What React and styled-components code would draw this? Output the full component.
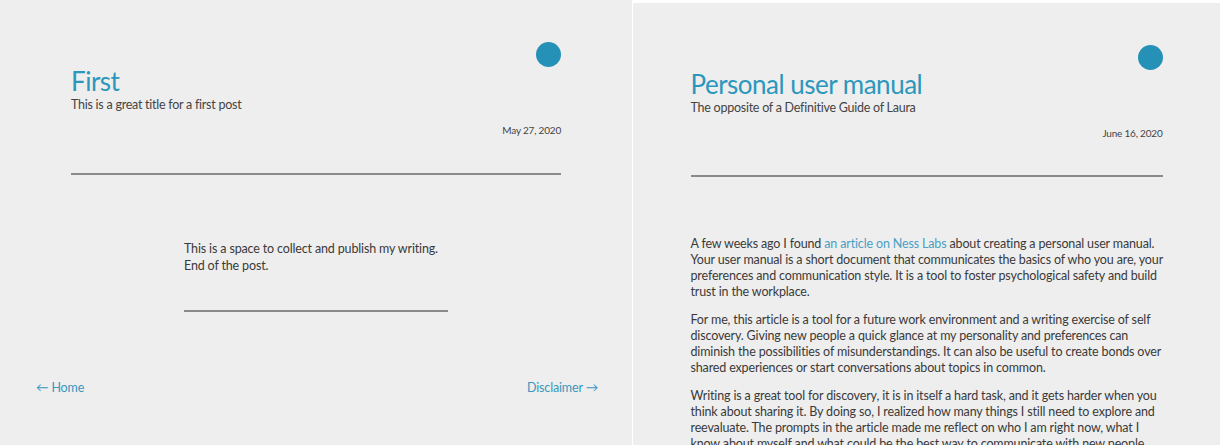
import React from 'react';
import styled, { createGlobalStyle } from 'styled-components';

const GlobalStyle = createGlobalStyle`
  html, body {
    margin: 0;
    padding: 0;
    background: #ffffff;
  }
  body {
    font-family: Lato, "Open Sans", sans-serif;
    color: #333;
  }
`;

// --- layout ---

const Page = styled.div`
  display: flex;
  align-items: flex-start;
  gap: 1px;
  width: 1222px;
  height: 445px;
  overflow: hidden;
`;

const Screen = styled.div`
  flex: 0 0 ${p => p.$width}px;
  height: 445px;
  margin-top: ${p => p.$top || 0}px;
  background: #eeeeee;
  display: flex;
  flex-direction: column;
  overflow: hidden;
`;

const Container = styled.div`
  width: ${p => p.$width}px;
  margin: 0 auto;
  display: flex;
  flex-direction: column;
`;

// --- header ---

const TopBar = styled.div`
  display: flex;
  justify-content: flex-end;
  padding-top: 42px;
  height: 25px;
`;

const Dot = styled.div`
  width: 25px;
  height: 25px;
  border-radius: 50%;
  background: #2591b7;
`;

const Title = styled.h1`
  margin: -1px 0 0;
  font-size: 26px;
  font-weight: 400;
  line-height: 30px;
  letter-spacing: -0.5px;
  color: #2c97bd;
`;

const Subtitle = styled.p`
  margin: 1px 0 0;
  font-size: 12.5px;
  line-height: 16px;
  letter-spacing: -0.25px;
  color: #444;
`;

const PostDate = styled.div`
  margin-top: 11px;
  text-align: right;
  font-size: 10px;
  letter-spacing: -0.2px;
  color: #444;
`;

const Rule = styled.hr`
  width: 100%;
  margin: ${p => p.$margin || '0'};
  border: none;
  border-top: 2px solid #8a8a8a;
`;

// --- body ---

const Content = styled.div`
  margin-top: ${p => p.$top}px;
  font-size: 12.5px;
  line-height: ${p => p.$lh || 16}px;
  letter-spacing: -0.15px;
  color: #3a3a3a;
`;

const Para = styled.p`
  margin: 0 0 12px;
`;

const Line = styled.span`
  display: block;
  white-space: nowrap;
`;

const Link = styled.a`
  color: #4aa0c4;
  text-decoration: none;
`;

// --- footer nav ---

const Nav = styled.nav`
  display: flex;
  justify-content: space-between;
  padding: 0 34px 0 36px;
  margin-top: 68px;
  font-size: 12.5px;
  letter-spacing: -0.15px;
  color: #3a97bd;
`;

const NavLink = styled.a`
  color: inherit;
  text-decoration: none;
`;

const App = () => {
  return (
    <>
      <GlobalStyle />
      <Page>
        <Screen $width={632}>
          <Container $width={490}>
            <TopBar><Dot /></TopBar>
            <Title>First</Title>
            <Subtitle>This is a great title for a first post</Subtitle>
            <PostDate>May 27, 2020</PostDate>
            <Rule $margin="37px 0 0" />
          </Container>
          <Container $width={264}>
            <Content $top={65} $lh={17}>
              <Para>
                <Line>This is a space to collect and publish my writing.</Line>
                <Line>End of the post.</Line>
              </Para>
            </Content>
            <Rule $margin="24px 0 0" />
          </Container>
          <Nav>
            <NavLink href="#">← Home</NavLink>
            <NavLink href="#">Disclaimer →</NavLink>
          </Nav>
        </Screen>

        <Screen $width={587} $top={3}>
          <Container $width={472}>
            <TopBar><Dot /></TopBar>
            <Title>Personal user manual</Title>
            <Subtitle>The opposite of a Definitive Guide of Laura</Subtitle>
            <PostDate>June 16, 2020</PostDate>
            <Rule $margin="36px 0 0" />
            <Content $top={59}>
              <Para>
                <Line>A few weeks ago I found <Link href="#">an article on Ness Labs</Link> about creating a personal user manual.</Line>
                <Line>Your user manual is a short document that communicates the basics of who you are, your</Line>
                <Line>preferences and communication style. It is a tool to foster psychological safety and build</Line>
                <Line>trust in the workplace.</Line>
              </Para>
              <Para>
                <Line>For me, this article is a tool for a future work environment and a writing exercise of self</Line>
                <Line>discovery. Giving new people a quick glance at my personality and preferences can</Line>
                <Line>diminish the possibilities of misunderstandings. It can also be useful to create bonds over</Line>
                <Line>shared experiences or start conversations about topics in common.</Line>
              </Para>
              <Para>
                <Line>Writing is a great tool for discovery, it is in itself a hard task, and it gets harder when you</Line>
                <Line>think about sharing it. By doing so, I realized how many things I still need to explore and</Line>
                <Line>reevaluate. The prompts in the article made me reflect on who I am right now, what I</Line>
                <Line>know about myself and what could be the best way to communicate with new people.</Line>
              </Para>
            </Content>
          </Container>
        </Screen>
      </Page>
    </>
  );
};

export default App;
